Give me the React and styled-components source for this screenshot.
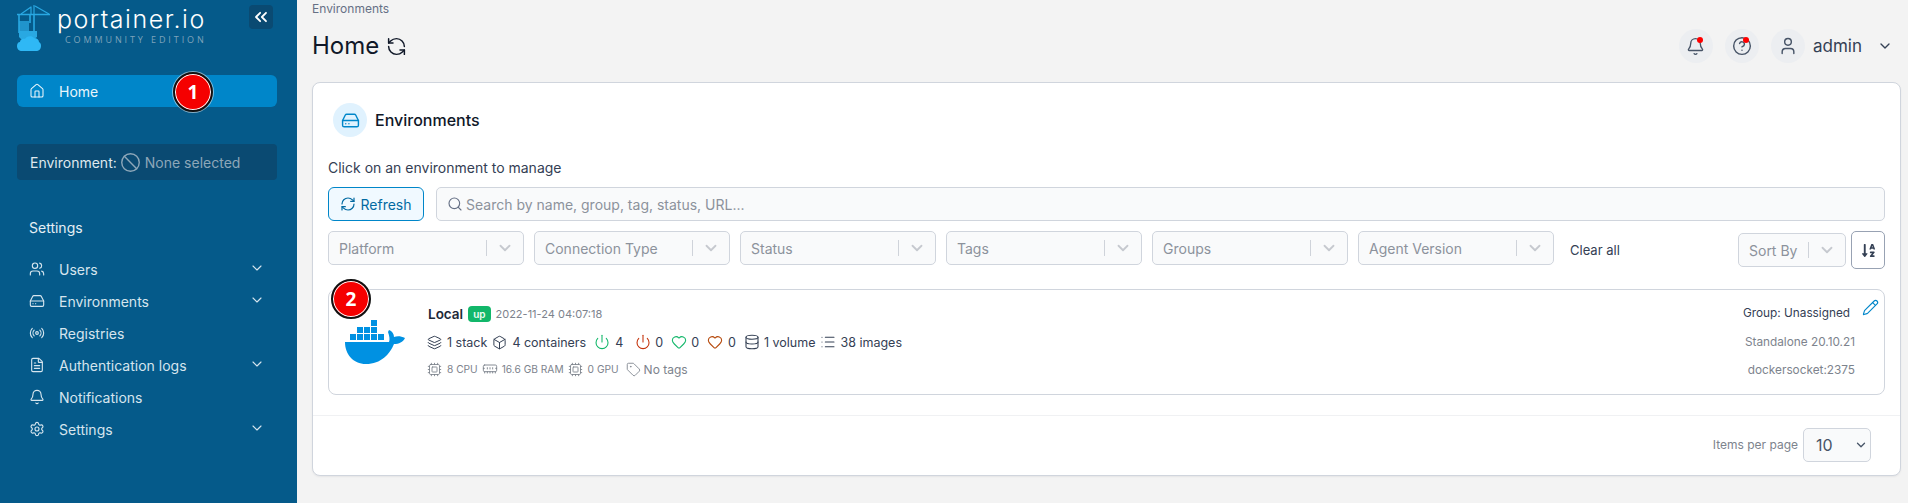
import React from "react";
import styled, { createGlobalStyle } from "styled-components";
import {
  House, Users, HardDrive, Radio, FileText, Bell, Settings, ChevronDown, ChevronsLeft, Ban,
  RefreshCw, RefreshCcw, Search, Layers, Box, Power, Heart, Database, List, Cpu, MemoryStick,
  Tag, Pencil, User, CircleHelp,
} from "lucide-react";
import { FaSortAlphaDown } from "react-icons/fa";

const GlobalStyle = createGlobalStyle`
  html, body { margin: 0; padding: 0; height: 100%; background: #f3f3f3; overflow: hidden; }
  body { font-family: Inter, "Liberation Sans", sans-serif; }
  * { box-sizing: border-box; }
`;

const Page = styled.div`
  display: flex;
  height: 503px;
  width: 1908px;
`;

/* sidebar */
const Sidebar = styled.aside`
  position: relative;
  width: 297px;
  flex: none;
  background: #055a8a;
  color: #e4eff5;
  padding: 0 20px 0 17px;
`;
const LogoRow = styled.div`
  height: 75px;
  padding-top: 5px;
  display: flex;
  align-items: flex-start;
`;
const LogoText = styled.div`
  margin: 1px 0 0 6px;
  display: flex;
  flex-direction: column;
  align-items: flex-start;
`;
const LogoName = styled.span`
  font-family: Inter, sans-serif;
  font-weight: 300;
  font-size: 25px;
  line-height: 26px;
  letter-spacing: 1.5px;
  color: #fff;
  white-space: nowrap;
`;
const LogoSub = styled.span`
  font-family: "Open Sans", sans-serif;
  font-size: 9px;
  line-height: 12px;
  margin: 2px 0 0 8px;
  letter-spacing: 2.9px;
  color: #7ea3bb;
  white-space: nowrap;
`;
const Collapse = styled.button`
  margin: 0 4px 0 auto;
  width: 24px;
  height: 24px;
  padding: 0;
  border: 0;
  border-radius: 4px;
  background: #0a4a72;
  color: #fff;
  display: flex;
  align-items: center;
  justify-content: center;
`;
const ActiveItem = styled.div`
  height: 32px;
  border-radius: 6px;
  background: #0086c9;
  display: flex;
  align-items: center;
  padding-left: 12px;
  gap: 14px;
  font-size: 14px;
  color: #eaf6fc;
`;
const EnvBox = styled.div`
  margin-top: 37px;
  height: 36px;
  border-radius: 4px;
  background: #0a4a72;
  display: flex;
  align-items: center;
  padding-left: 13px;
  font-size: 14px;
  color: #dfe8ee;
  gap: 3px;
`;
const EnvMuted = styled.span`
  display: flex;
  align-items: center;
  gap: 4px;
  color: #8da7b9;
`;
const SectionTitle = styled.div`
  margin: 39px 0 0 12px;
  height: 18px;
  line-height: 18px;
  font-size: 14px;
  color: #e4eff5;
`;
const Menu = styled.nav`
  margin-top: 16px;
`;
const MenuRow = styled.div`
  height: 32px;
  display: flex;
  align-items: center;
  padding: 0 12px 0 12px;
  gap: 14px;
  font-size: 14px;
  color: #d6e5ee;
`;
const MenuChevron = styled(ChevronDown)`
  margin-left: auto;
  margin-top: -2px;
`;

/* main */
const Main = styled.main`
  flex: 1;
  min-width: 0;
  padding: 1px 7px 0 15px;
`;
const Crumb = styled.div`
  font-size: 12px;
  line-height: 16px;
  color: #667085;
`;
const TopBar = styled.div`
  height: 65px;
  display: flex;
  align-items: flex-start;
  padding-top: 12px;
`;
const Title = styled.h1`
  margin: 0;
  font-size: 24px;
  font-weight: 400;
  line-height: 34px;
  color: #101828;
  display: flex;
  align-items: center;
  gap: 7px;
`;
const UserArea = styled.div`
  margin-left: auto;
  display: flex;
  align-items: center;
  height: 34px;
  padding-right: 8px;
`;
const RoundIcon = styled.span`
  position: relative;
  width: 34px;
  height: 34px;
  border-radius: 50%;
  background: #eceef1;
  color: #475467;
  display: flex;
  align-items: center;
  justify-content: center;
  margin-right: ${(p) => p.$gap}px;
`;
const Dot = styled.i`
  position: absolute;
  top: 8px;
  right: 10px;
  width: 6px;
  height: 6px;
  border-radius: 50%;
  background: #f00;
`;
const UserName = styled.span`
  font-size: 17px;
  color: #344054;
  margin-right: 15px;
`;
const Card = styled.section`
  height: 394px;
  background: #fff;
  border: 1px solid #d0d5dd;
  border-radius: 8px;
  box-shadow: 0 1px 2px rgba(16, 24, 40, 0.06);
  display: flex;
  flex-direction: column;
`;
const CardHead = styled.div`
  display: flex;
  align-items: center;
  gap: 8px;
  padding: 20px 0 0 20px;
`;
const HeadIcon = styled.span`
  width: 34px;
  height: 34px;
  border-radius: 50%;
  background: #e0f2fe;
  color: #0086c9;
  display: flex;
  align-items: center;
  justify-content: center;
`;
const HeadTitle = styled.h2`
  margin: 0;
  font-size: 16px;
  font-weight: 500;
  color: #101828;
`;
const Body = styled.div`
  padding: 0 15px;
  flex: 1;
`;
const Hint = styled.div`
  margin-top: 21px;
  font-size: 14px;
  line-height: 20px;
  color: #344054;
`;
const SearchRow = styled.div`
  margin-top: 9px;
  display: flex;
  gap: 12px;
`;
const RefreshBtn = styled.button`
  width: 96px;
  height: 34px;
  border: 1px solid #0086c9;
  border-radius: 6px;
  background: #f0f9ff;
  color: #026aa2;
  font: 14px Inter, sans-serif;
  display: flex;
  align-items: center;
  justify-content: center;
  gap: 4px;
  padding: 0;
`;
const SearchBox = styled.div`
  flex: 1;
  height: 34px;
  border: 1px solid #d0d5dd;
  border-radius: 5px;
  background: #f9fafb;
  color: #667085;
  display: flex;
  align-items: center;
  gap: 3px;
  padding-left: 10px;
`;
const Placeholder = styled.span`
  font-size: 14px;
  color: #8c929c;
`;
const FilterRow = styled.div`
  margin-top: 10px;
  display: flex;
  align-items: flex-start;
  gap: 10px;
`;
const Select = styled.div`
  width: ${(p) => p.$w}px;
  height: 34px;
  border: 1px solid #d0d5dd;
  border-radius: 5px;
  background: #f9fafb;
  display: flex;
  align-items: center;
  padding-left: 10px;
  font-size: 14px;
  color: #8c929c;
`;
const SelectBar = styled.i`
  margin-left: auto;
  width: 1px;
  height: 16px;
  background: #cfd3da;
`;
const SelectChevron = styled(ChevronDown)`
  color: #c6c9cf;
  margin: 0 9px;
  flex: none;
`;
const ClearAll = styled.span`
  margin: 11px 0 0 6px;
  font-size: 13px;
  line-height: 16px;
  color: #344054;
`;
const SortArea = styled.div`
  margin-left: auto;
  display: flex;
  align-items: center;
  gap: 5px;
`;
const SortBtn = styled.button`
  width: 34px;
  height: 38px;
  padding: 0;
  border: 1px solid #98a2b3;
  border-radius: 5px;
  background: #fff;
  color: #344054;
  display: flex;
  align-items: center;
  justify-content: center;
`;
const EnvCard = styled.article`
  margin-top: 20px;
  height: 106px;
  border: 1px solid #d0d5dd;
  border-radius: 8px;
  display: flex;
  position: relative;
`;
const EnvLogo = styled.div`
  width: 98px;
  flex: none;
  padding: 30px 0 0 16px;
`;
const EnvInfo = styled.div`
  flex: 1;
  padding-top: 14px;
`;
const NameRow = styled.div`
  display: flex;
  align-items: center;
  height: 20px;
  gap: 5px;
  padding-left: 1px;
`;
const EnvName = styled.b`
  font-size: 13.5px;
  font-weight: 600;
  color: #1d2939;
`;
const UpBadge = styled.span`
  height: 16px;
  line-height: 16px;
  padding: 0 5px;
  border-radius: 4px;
  background: #12b76a;
  color: #ecfdf3;
  font-size: 10px;
  font-weight: 600;
`;
const Stamp = styled.span`
  font-size: 11px;
  color: #7d838d;
`;
const StatsRow = styled.div`
  margin-top: 8px;
  height: 20px;
  display: flex;
  align-items: center;
  color: #344054;
  font-size: 12.5px;
`;
const Stat = styled.span`
  display: flex;
  align-items: center;
  gap: ${(p) => p.$gap || 5}px;
  margin-right: ${(p) => p.$after}px;
  white-space: nowrap;
`;
const MetaRow = styled(StatsRow)`
  margin-top: 7px;
  font-size: 10.2px;
  color: #7d838d;
`;
const TagsText = styled.span`
  font-size: 12px;
`;
const EnvRight = styled.div`
  width: 142px;
  flex: none;
  padding: 13px 29px 0 0;
  display: flex;
  flex-direction: column;
  align-items: flex-end;
  font-size: 11.8px;
  line-height: 20px;
  color: #7d838d;
`;
const GroupText = styled.span`
  color: #344054;
  margin: 0 5px 9px 0;
  white-space: nowrap;
`;
const Muted = styled.span`
  white-space: nowrap;
  margin-bottom: 8px;
`;
const EditIcon = styled(Pencil)`
  position: absolute;
  top: 9px;
  right: 5px;
  color: #0086c9;
`;
const Footer = styled.div`
  height: 60px;
  border-top: 1px solid #f0f1f3;
  display: flex;
  align-items: center;
  justify-content: flex-end;
  gap: 5px;
  padding: 0 29px 2px 0;
`;
const PerPageLabel = styled.span`
  font-size: 12px;
  color: #7d838d;
`;
const PerPage = styled.div`
  width: 68px;
  height: 34px;
  border: 1px solid #d0d5dd;
  border-radius: 5px;
  background: #f9fafb;
  display: flex;
  align-items: center;
  justify-content: space-between;
  padding: 0 2px 0 12px;
  font-size: 16px;
  color: #475467;
`;

/* numbered annotation marks painted over the screenshot */
const Mark = styled.span`
  position: absolute;
  left: ${(p) => p.$x}px;
  top: ${(p) => p.$y}px;
  width: 40px;
  height: 40px;
  border-radius: 50%;
  background: #f50000;
  border: 2px solid #111;
  box-shadow: 0 0 0 1px #fff inset, 0 0 0 1px rgba(255, 255, 255, 0.5);
  color: #fff;
  font-family: "Open Sans", sans-serif;
  font-size: 19px;
  font-weight: 700;
  display: flex;
  align-items: center;
  justify-content: center;
  z-index: 3;
`;

const CraneLogo = () => (
  <svg width="34" height="46" viewBox="0 0 34 46" fill="none">
    <g stroke="#29a8e2">
      <path d="M0 9.5h33" strokeWidth="1.6" />
      <path d="M17 0v9M14 1.5v8M18 1 32 9M14 2 4 9" strokeWidth="1.2" />
      <path d="M2 10v18M17 10v23M13 10v8" strokeWidth="1.6" />
    </g>
    <g fill="#29a8e2">
      <rect x="2" y="16" width="10" height="10" opacity="0.75" />
      <path d="M2 26h18v6c-3 3-12 3-16 2l-2-2z" />
    </g>
    <path
      d="M5 46c-3 0-5-2-5-5 0-2 1-4 3-4 0-3 3-4 5-3 1-3 7-4 9-1 3 0 5 2 5 4 2 1 2 3 2 4 0 3-2 5-5 5z"
      fill="#2fb8f5"
    />
  </svg>
);

const DockerLogo = () => (
  <svg width="60" height="44" viewBox="0 0 60 44" fill="#0091e2">
    <rect x="26" y="0" width="6" height="6" />
    <rect x="12" y="7" width="6" height="6" />
    <rect x="19" y="7" width="6" height="6" />
    <rect x="26" y="7" width="6" height="6" />
    <rect x="5" y="14" width="6" height="6" />
    <rect x="12" y="14" width="6" height="6" />
    <rect x="19" y="14" width="6" height="6" />
    <rect x="26" y="14" width="6" height="6" />
    <rect x="33" y="14" width="6" height="6" />
    <path d="M0 22h44c1-2 .5-6-1-10l1-2c3 1 5 4 5 7 3-1 7-1 11 1-2 4-6 6-11 6-4 10-13 20-28 20C8 44 0 34 0 22z" />
  </svg>
);

const filters = [
  ["Platform", 196],
  ["Connection Type", 196],
  ["Status", 196],
  ["Tags", 196],
  ["Groups", 196],
  ["Agent Version", 196],
];

const menu = [
  { label: "Users", Icon: Users, more: true },
  { label: "Environments", Icon: HardDrive, more: true },
  { label: "Registries", Icon: Radio },
  { label: "Authentication logs", Icon: FileText, more: true },
  { label: "Notifications", Icon: Bell },
  { label: "Settings", Icon: Settings, more: true },
];

export default function App() {
  return (
    <Page>
      <GlobalStyle />
      <Sidebar>
        <LogoRow>
          <CraneLogo />
          <LogoText>
            <LogoName>portainer.io</LogoName>
            <LogoSub>COMMUNITY EDITION</LogoSub>
          </LogoText>
          <Collapse>
            <ChevronsLeft size={20} strokeWidth={2.2} />
          </Collapse>
        </LogoRow>
        <ActiveItem>
          <House size={16} strokeWidth={1.6} />
          Home
        </ActiveItem>
        <EnvBox>
          Environment:
          <EnvMuted>
            <Ban size={21} strokeWidth={1.6} />
            None selected
          </EnvMuted>
        </EnvBox>
        <SectionTitle>Settings</SectionTitle>
        <Menu>
          {menu.map(({ label, Icon, more }) => (
            <MenuRow key={label}>
              <Icon size={16} strokeWidth={1.7} />
              {label}
              {more && <MenuChevron size={16} strokeWidth={1.7} />}
            </MenuRow>
          ))}
        </Menu>
      </Sidebar>
      <Main>
        <Crumb>Environments</Crumb>
        <TopBar>
          <Title>
            Home
            <RefreshCcw size={21} strokeWidth={1.7} />
          </Title>
          <UserArea>
            <RoundIcon $gap={12}>
              <Bell size={19} strokeWidth={1.7} />
              <Dot />
            </RoundIcon>
            <RoundIcon $gap={12}>
              <CircleHelp size={20} strokeWidth={1.7} />
              <Dot />
            </RoundIcon>
            <RoundIcon $gap={8}>
              <User size={20} strokeWidth={1.7} />
            </RoundIcon>
            <UserName>admin</UserName>
            <ChevronDown size={16} color="#344054" />
          </UserArea>
        </TopBar>
        <Card>
          <CardHead>
            <HeadIcon>
              <HardDrive size={19} strokeWidth={1.8} />
            </HeadIcon>
            <HeadTitle>Environments</HeadTitle>
          </CardHead>
          <Body>
            <Hint>Click on an environment to manage</Hint>
            <SearchRow>
              <RefreshBtn>
                <RefreshCw size={16} strokeWidth={1.8} />
                Refresh
              </RefreshBtn>
              <SearchBox>
                <Search size={16} strokeWidth={1.7} />
                <Placeholder>Search by name, group, tag, status, URL...</Placeholder>
              </SearchBox>
            </SearchRow>
            <FilterRow>
              {filters.map(([label, w]) => (
                <Select key={label} $w={w}>
                  {label}
                  <SelectBar />
                  <SelectChevron size={18} strokeWidth={2.4} />
                </Select>
              ))}
              <ClearAll>Clear all</ClearAll>
              <SortArea>
                <Select $w={108}>
                  Sort By
                  <SelectBar />
                  <SelectChevron size={18} strokeWidth={2.4} />
                </Select>
                <SortBtn>
                  <FaSortAlphaDown size={15} />
                </SortBtn>
              </SortArea>
            </FilterRow>
            <EnvCard>
              <EnvLogo>
                <DockerLogo />
              </EnvLogo>
              <EnvInfo>
                <NameRow>
                  <EnvName>Local</EnvName>
                  <UpBadge>up</UpBadge>
                  <Stamp>2022-11-24 04:07:18</Stamp>
                </NameRow>
                <StatsRow>
                  <Stat $after={5}><Layers size={15} strokeWidth={1.6} />1 stack</Stat>
                  <Stat $after={8}><Box size={15} strokeWidth={1.6} />4 containers</Stat>
                  <Stat $after={12}><Power size={16} strokeWidth={1.6} color="#12b76a" />4</Stat>
                  <Stat $after={8} $gap={4}><Power size={16} strokeWidth={1.6} color="#c4320a" />0</Stat>
                  <Stat $after={8} $gap={4}><Heart size={16} strokeWidth={1.6} color="#12b76a" />0</Stat>
                  <Stat $after={8}><Heart size={16} strokeWidth={1.6} color="#b54708" />0</Stat>
                  <Stat $after={5} $gap={4}><Database size={16} strokeWidth={1.6} />1 volume</Stat>
                  <Stat $after={0} $gap={4}><List size={16} strokeWidth={1.6} />38 images</Stat>
                </StatsRow>
                <MetaRow>
                  <Stat $after={4}><Cpu size={15} strokeWidth={1.4} />8 CPU</Stat>
                  <Stat $after={4} $gap={4}><MemoryStick size={16} strokeWidth={1.4} />16.6 GB RAM</Stat>
                  <Stat $after={7}><Cpu size={15} strokeWidth={1.4} />0 GPU</Stat>
                  <Stat $after={0} $gap={3}><Tag size={15} strokeWidth={1.4} /><TagsText>No tags</TagsText></Stat>
                </MetaRow>
              </EnvInfo>
              <EnvRight>
                <GroupText>Group: Unassigned</GroupText>
                <Muted>Standalone 20.10.21</Muted>
                <Muted>dockersocket:2375</Muted>
              </EnvRight>
              <EditIcon size={17} strokeWidth={1.6} />
            </EnvCard>
          </Body>
          <Footer>
            <PerPageLabel>Items per page</PerPageLabel>
            <PerPage>
              10
              <ChevronDown size={14} strokeWidth={2.2} />
            </PerPage>
          </Footer>
        </Card>
      </Main>
      <Mark $x={173} $y={72}>1</Mark>
      <Mark $x={331} $y={279}>2</Mark>
    </Page>
  );
}
